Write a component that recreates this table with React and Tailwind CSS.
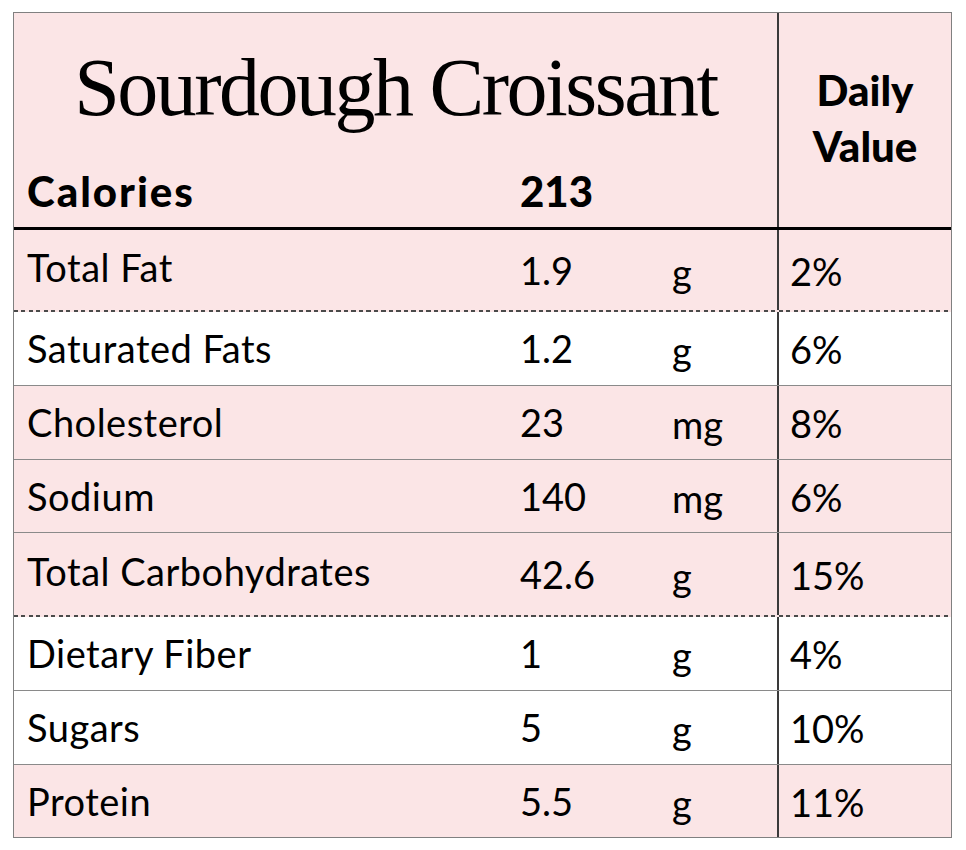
const rows = [
  { name: "Total Fat", amount: "1.9", unit: "g", dv: "2%", pink: true, line: "dashed", h: "h-[82px]" },
  { name: "Saturated Fats", amount: "1.2", unit: "g", dv: "6%", pink: false, line: "solid", h: "h-[74px]" },
  { name: "Cholesterol", amount: "23", unit: "mg", dv: "8%", pink: true, line: "solid", h: "h-[74px]" },
  { name: "Sodium", amount: "140", unit: "mg", dv: "6%", pink: true, line: "solid", h: "h-[73px]" },
  { name: "Total Carbohydrates", amount: "42.6", unit: "g", dv: "15%", pink: true, line: "dashed", h: "h-[84px]" },
  { name: "Dietary Fiber", amount: "1", unit: "g", dv: "4%", pink: false, line: "solid", h: "h-[74px]" },
  { name: "Sugars", amount: "5", unit: "g", dv: "10%", pink: false, line: "solid", h: "h-[74px]" },
  { name: "Protein", amount: "5.5", unit: "g", dv: "11%", pink: true, line: "none", h: "h-[72px]" },
];

function Row({ row }) {
  const bg = row.pink ? "bg-[#fbe5e6]" : "bg-white";
  const dashed = row.line === "dashed";

  return (
    <div className={`flex flex-col ${row.h} ${bg}`}>
      <div className="flex flex-1">
        <div className={`w-[506px] pl-[13px] flex items-center tracking-[0.5px] ${dashed ? "pb-[6px]" : ""}`}>{row.name}</div>
        <div className="w-[152px] flex items-center">{row.amount}</div>
        <div className="w-[105px] flex items-center pt-[4px]">{row.unit}</div>
        <div className="flex-1 border-l-2 border-[#3a3a3a] pl-[11px] flex items-center pt-[2px]">{row.dv}</div>
      </div>
      {dashed && (
        <div className="h-[2px] bg-[repeating-linear-gradient(to_right,#4a4a4a_0px,#4a4a4a_4px,transparent_4px,transparent_7.5px)]" />
      )}
      {row.line === "solid" && <div className="h-px bg-[#8a8a8a]" />}
    </div>
  );
}

export default function App() {
  return (
    <div className="w-[966px] h-[850px] bg-white pt-[12px] pl-[13px]">
      <div className="w-[939px] border border-[#808080] text-black text-[38px] font-['Lato',sans-serif]">
        {/* Header */}
        <div className="flex h-[217px] border-b-[3px] border-black bg-[#fbe5e6]">
          <div className="w-[763px] flex flex-col">
            <div className="h-[142px] flex items-center justify-center pt-[8px]">
              <h1 className="font-['Liberation_Serif',serif] text-[82px] leading-none tracking-[-2.5px]">
                Sourdough Croissant
              </h1>
            </div>
            <div className="flex items-center flex-1">
              <div className="w-[506px] pl-[13px] font-black text-[42px] tracking-[2px]">Calories</div>
              <div className="font-black text-[42px]">213</div>
            </div>
          </div>
          <div className="flex-1 border-l-2 border-[#3a3a3a] flex items-center justify-center text-center pb-[4px]">
            <div className="font-black text-[42px] leading-[56px]">
              Daily
              <br />
              Value
            </div>
          </div>
        </div>

        {rows.map((r) => (
          <Row key={r.name} row={r} />
        ))}
      </div>
    </div>
  );
}
